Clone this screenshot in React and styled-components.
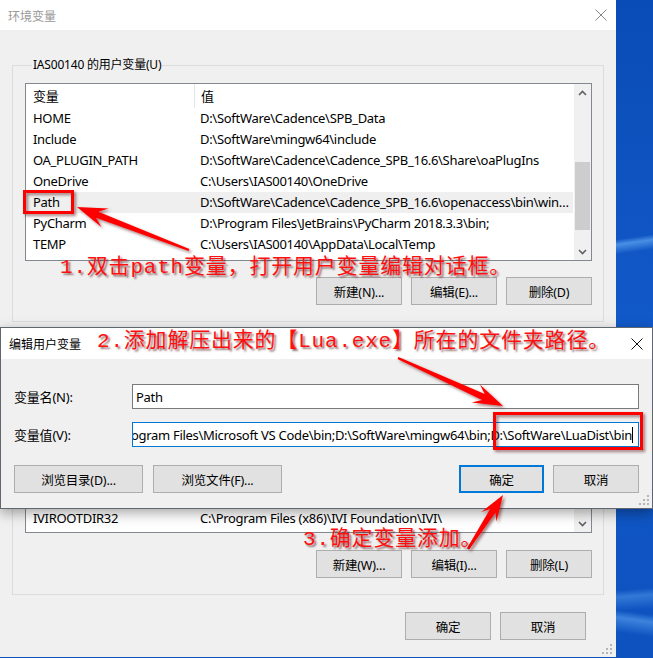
import React from "react";
import styled, { createGlobalStyle } from "styled-components";

const GlobalStyle = createGlobalStyle`
  html, body {
    margin: 0;
    padding: 0;
    background: #0d52bf;
  }
  body {
    font-family: "Noto Sans", "Noto Sans CJK SC", sans-serif;
    font-size: 12px;
    color: #000;
  }
`;

const Desktop = styled.div`
  position: relative;
  width: 653px;
  height: 658px;
  overflow: hidden;
  background:
    linear-gradient(172deg, transparent 43.5%, rgba(120, 190, 255, 0.55) 44.2%, transparent 45.5%),
    linear-gradient(188deg, transparent 82%, rgba(120, 190, 255, 0.45) 83%, transparent 85%),
    linear-gradient(176deg, transparent 90%, rgba(120, 190, 255, 0.35) 91%, transparent 93%),
    linear-gradient(180deg, #0a4cb6 0%, #1259c9 50%, #0d52bf 100%);
`;

const Window = styled.div`
  width: 616px;
  height: 657px;
  background: #f0f0f0;
  display: flex;
  flex-direction: column;
  position: relative;
`;

const TitleBar = styled.div`
  height: ${(p) => p.$h || 30}px;
  flex-shrink: 0;
  background: #fff;
  display: flex;
  align-items: center;
  justify-content: space-between;
  padding: 0 9px 0 8px;
  color: ${(p) => (p.$active ? "#000" : "#999")};
  font-family: "Noto Sans CJK SC", sans-serif;
  font-size: 12px;
`;

const Close = styled.svg`
  width: 12px;
  height: 12px;
  stroke: ${(p) => (p.$active ? "#111" : "#888")};
  stroke-width: 1;
`;

const Body = styled.div`
  flex: 1;
  padding: 26px 12px 0 12px;
  display: flex;
  flex-direction: column;
`;

const Group = styled.fieldset`
  margin: ${(p) => p.$mt || 0}px 0 0 0;
  padding: 9px 11px 16px 12px;
  border: 1px solid #dcdcdc;
  min-width: 0;
`;

const Legend = styled.legend`
  padding: 0 1px;
  margin-left: 7px;
  font-size: 12px;
  letter-spacing: -0.2px;
  line-height: 18px;
  font-family: "Noto Sans", "Noto Sans CJK SC", sans-serif;
`;

const ListBox = styled.div`
  height: ${(p) => p.$h}px;
  border: 1px solid #828790;
  background: #fff;
  display: flex;
  overflow: hidden;
`;

const Columns = styled.div`
  flex: 1;
  min-width: 0;
  overflow: hidden;
`;

const Row = styled.div`
  display: grid;
  grid-template-columns: 168px minmax(0, 1fr);
  height: ${(p) => (p.$head ? 24 : 21)}px;
  line-height: ${(p) => (p.$head ? 24 : 21)}px;
  background: ${(p) => (p.$selected ? "#efefef" : "transparent")};
  font-size: 13px;
  letter-spacing: -0.3px;
  white-space: nowrap;
`;

const Cell = styled.div`
  padding-left: ${(p) => (p.$second ? 6 : 7)}px;
  padding-right: 4px;
  overflow: hidden;
  text-overflow: ellipsis;
  border-left: ${(p) => (p.$divider ? "1px solid #e5e5e5" : "none")};
`;

const Rows = styled.div`
  margin-top: ${(p) => p.$shift || 0}px;
`;

const ScrollBar = styled.div`
  width: 17px;
  flex-shrink: 0;
  background: #f0f0f0;
  display: flex;
  flex-direction: column;
  border-left: 1px solid #fff;
`;

const ScrollArrow = styled.div`
  height: 17px;
  display: flex;
  align-items: center;
  justify-content: center;
  margin-top: ${(p) => (p.$bottom ? "auto" : "0")};
`;

const Track = styled.div`
  flex: 1;
  display: flex;
  flex-direction: column;
`;

const Thumb = styled.div`
  margin: ${(p) => p.$top}px 1px 0 1px;
  height: ${(p) => p.$h}px;
  background: #cdcdcd;
`;

const ButtonRow = styled.div`
  display: flex;
  justify-content: ${(p) => (p.$split ? "space-between" : "flex-end")};
  gap: 9px;
  margin-top: ${(p) => p.$mt || 0}px;
  padding-right: ${(p) => p.$pr || 0}px;
`;

const ButtonGroup = styled.div`
  display: flex;
  gap: ${(p) => p.$gap || 9}px;
`;

const Button = styled.div`
  width: ${(p) => p.$w || 86}px;
  height: 28px;
  box-sizing: border-box;
  background: #e1e1e1;
  border: ${(p) => (p.$default ? "2px solid #0078d7" : "1px solid #adadad")};
  display: flex;
  align-items: center;
  justify-content: center;
  font-size: 12.5px;
  letter-spacing: -0.2px;
  font-family: "Noto Sans", "Noto Sans CJK SC", sans-serif;
`;

const Grip = styled.svg`
  position: absolute;
  right: ${(p) => p.$r}px;
  bottom: ${(p) => p.$b}px;
  width: 10px;
  height: 10px;
  fill: #b5b5b5;
`;

const Dialog = styled.div`
  position: absolute;
  top: 327px;
  left: 0;
  width: 653px;
  height: 182px;
  box-sizing: border-box;
  border: 1px solid #5f6670;
  background: #f0f0f0;
  box-shadow: 0 4px 12px rgba(0, 0, 0, 0.35);
  display: flex;
  flex-direction: column;
`;

const DialogBody = styled.div`
  flex: 1;
  padding: 25px 13px 0 13px;
  display: flex;
  flex-direction: column;
`;

const Field = styled.div`
  display: grid;
  grid-template-columns: 118px 507px;
  align-items: center;
  margin-top: ${(p) => p.$mt || 0}px;
`;

const FieldLabel = styled.div`
  font-size: 13px;
  letter-spacing: -0.2px;
`;

const Input = styled.div`
  height: 25px;
  box-sizing: border-box;
  border: 1px solid ${(p) => (p.$focus ? "#0078d7" : "#7a7a7a")};
  background: #fff;
  display: flex;
  align-items: center;
  justify-content: ${(p) => (p.$end ? "flex-end" : "flex-start")};
  padding: 0 3px;
  overflow: hidden;
  white-space: nowrap;
  font-size: 13px;
  letter-spacing: -0.3px;
`;

const Caret = styled.span`
  display: inline-block;
  width: 1px;
  height: 16px;
  background: #000;
  flex-shrink: 0;
  margin-right: 2px;
`;

const Overlay = styled.svg`
  position: absolute;
  left: 0;
  top: 0;
  width: 653px;
  height: 658px;
  pointer-events: none;
`;

const Note = styled.div`
  position: absolute;
  left: ${(p) => p.$x}px;
  top: ${(p) => p.$y}px;
  color: #ff1010;
  font-family: "Liberation Mono", "Noto Sans CJK SC", monospace;
  font-size: 21px;
  letter-spacing: 0.8px;
  line-height: 28px;
  white-space: nowrap;
  text-shadow: 2px 2px 2px rgba(70, 0, 0, 0.55);
`;

const userVars = [
  ["HOME", "D:\\SoftWare\\Cadence\\SPB_Data"],
  ["Include", "D:\\SoftWare\\mingw64\\include"],
  ["OA_PLUGIN_PATH", "D:\\SoftWare\\Cadence\\Cadence_SPB_16.6\\Share\\oaPlugIns"],
  ["OneDrive", "C:\\Users\\IAS00140\\OneDrive"],
  ["Path", "D:\\SoftWare\\Cadence\\Cadence_SPB_16.6\\openaccess\\bin\\win32\\opt;C:\\Users"],
  ["PyCharm", "D:\\Program Files\\JetBrains\\PyCharm 2018.3.3\\bin;"],
  ["TEMP", "C:\\Users\\IAS00140\\AppData\\Local\\Temp"],
  ["TMP", "C:\\Users\\IAS00140\\AppData\\Local\\Temp"],
];

const sysVars = [
  ["CDS_LIC_FILE", "5280@localhost"],
  ["CDSROOT", "D:\\SoftWare\\Cadence\\Cadence_SPB_16.6"],
  ["ComSpec", "C:\\WINDOWS\\system32\\cmd.exe"],
  ["DriverData", "C:\\Windows\\System32\\Drivers\\DriverData"],
  ["HOME", "D:\\SoftWare\\Cadence\\SPB_Data"],
  ["INCLUDE", "D:\\SoftWare\\mingw64\\include"],
  ["IVIROOTDIR32", "C:\\Program Files (x86)\\IVI Foundation\\IVI\\"],
  ["IVIROOTDIR64", "C:\\Program Files\\IVI Foundation\\IVI\\"],
];

const Chevron = ({ down }) => (
  <svg width="9" height="6" viewBox="0 0 9 6">
    <path
      d={down ? "M1 1 L4.5 4.5 L8 1" : "M1 5 L4.5 1.5 L8 5"}
      fill="none"
      stroke="#606060"
      strokeWidth="1.6"
    />
  </svg>
);

const X = ({ active }) => (
  <Close viewBox="0 0 12 12" $active={active}>
    <path d="M0.5 0.5 L11.5 11.5 M11.5 0.5 L0.5 11.5" />
  </Close>
);

const VarList = ({ items, height, selected, thumbTop, thumbH, shift }) => (
  <ListBox $h={height}>
    <Columns>
      <Row $head>
        <Cell>变量</Cell>
        <Cell $second $divider>值</Cell>
      </Row>
      <Rows $shift={shift}>
        {items.map(([k, v]) => (
          <Row key={k} $selected={k === selected}>
            <Cell>{k}</Cell>
            <Cell $second>{v}</Cell>
          </Row>
        ))}
      </Rows>
    </Columns>
    <ScrollBar>
      <ScrollArrow>
        <Chevron />
      </ScrollArrow>
      <Track>
        <Thumb $top={thumbTop} $h={thumbH} />
      </Track>
      <ScrollArrow $bottom>
        <Chevron down />
      </ScrollArrow>
    </ScrollBar>
  </ListBox>
);

const GripDots = (props) => (
  <Grip viewBox="0 0 10 10" {...props}>
    <rect x="8" y="0" width="2" height="2" />
    <rect x="4" y="4" width="2" height="2" />
    <rect x="8" y="4" width="2" height="2" />
    <rect x="0" y="8" width="2" height="2" />
    <rect x="4" y="8" width="2" height="2" />
    <rect x="8" y="8" width="2" height="2" />
  </Grip>
);

const arrowPoints = (x1, y1, x2, y2, head = 30, hw = 10, tw = 1.2, bw = 3.2) => {
  const dx = x2 - x1;
  const dy = y2 - y1;
  const len = Math.hypot(dx, dy);
  const ux = dx / len;
  const uy = dy / len;
  const nx = -uy;
  const ny = ux;
  const bx = x2 - ux * head;
  const by = y2 - uy * head;
  const cx = x2 - ux * head * 0.72;
  const cy = y2 - uy * head * 0.72;
  const pts = [
    [x1 + nx * tw, y1 + ny * tw],
    [cx + nx * bw, cy + ny * bw],
    [bx + nx * hw, by + ny * hw],
    [x2, y2],
    [bx - nx * hw, by - ny * hw],
    [cx - nx * bw, cy - ny * bw],
    [x1 - nx * tw, y1 - ny * tw],
  ];
  return pts.map((p) => p.map((n) => n.toFixed(1)).join(",")).join(" ");
};

const Annotations = () => (
  <Overlay viewBox="0 0 653 658">
    <defs>
      <filter id="sh" x="-20%" y="-20%" width="140%" height="140%">
        <feDropShadow dx="2" dy="2" stdDeviation="1.5" floodColor="#400" floodOpacity="0.5" />
      </filter>
    </defs>
    <g filter="url(#sh)">
      <rect x="24.5" y="191.5" width="48" height="21" fill="none" stroke="#f00" strokeWidth="3" />
      <rect x="494.5" y="413.5" width="147" height="35" fill="none" stroke="#f00" strokeWidth="3" />
      <polygon points={arrowPoints(189, 250, 77, 207)} fill="#f00" />
      <polygon points={arrowPoints(398, 358, 503, 406)} fill="#f00" />
      <polygon points={arrowPoints(468, 549, 503, 495, 26, 9)} fill="#f00" />
    </g>
  </Overlay>
);

export default function App() {
  return (
    <>
      <GlobalStyle />
      <Desktop>
        <Window>
          <TitleBar>
            <span>环境变量</span>
            <X />
          </TitleBar>
          <Body>
            <Group>
              <Legend>IAS00140 的用户变量(U)</Legend>
              <VarList items={userVars} height={176} selected="Path" thumbTop={61} thumbH={68} />
              <ButtonRow $mt={16}>
                <Button>新建(N)...</Button>
                <Button>编辑(E)...</Button>
                <Button>删除(D)</Button>
              </ButtonRow>
            </Group>
            <Group $mt={5}>
              <Legend>系统变量(S)</Legend>
              <VarList items={sysVars} height={177} thumbTop={20} thumbH={60} shift={3} />
              <ButtonRow $mt={17}>
                <Button>新建(W)...</Button>
                <Button>编辑(I)...</Button>
                <Button>删除(L)</Button>
              </ButtonRow>
            </Group>
            <ButtonRow $mt={17} $pr={18}>
              <Button>确定</Button>
              <Button>取消</Button>
            </ButtonRow>
          </Body>
          <GripDots $r={4} $b={3} />
        </Window>

        <Dialog>
          <TitleBar $h={31} $active>
            <span>编辑用户变量</span>
            <X active />
          </TitleBar>
          <DialogBody>
            <Field>
              <FieldLabel>变量名(N):</FieldLabel>
              <Input>Path</Input>
            </Field>
            <Field $mt={13}>
              <FieldLabel>变量值(V):</FieldLabel>
              <Input $focus $end>
                <span>
                  D:\SoftWare\Cadence\Cadence_SPB_16.6\openaccess\bin\win32\opt;C:\Program Files\Microsoft VS Code\bin;D:\SoftWare\mingw64\bin;D:\SoftWare\LuaDist\bin
                </span>
                <Caret />
              </Input>
            </Field>
            <ButtonRow $mt={18} $split>
              <ButtonGroup $gap={10}>
                <Button $w={129}>浏览目录(D)...</Button>
                <Button $w={129}>浏览文件(F)...</Button>
              </ButtonGroup>
              <ButtonGroup $gap={9}>
                <Button $w={85} $default>确定</Button>
                <Button $w={86}>取消</Button>
              </ButtonGroup>
            </ButtonRow>
          </DialogBody>
          <GripDots $r={3} $b={3} />
        </Dialog>

        <Annotations />
        <Note $x={60} $y={254}>1.双击path变量，打开用户变量编辑对话框。</Note>
        <Note $x={97} $y={328}>2.添加解压出来的【Lua.exe】所在的文件夹路径。</Note>
        <Note $x={303} $y={526}>3.确定变量添加。</Note>
      </Desktop>
    </>
  );
}
